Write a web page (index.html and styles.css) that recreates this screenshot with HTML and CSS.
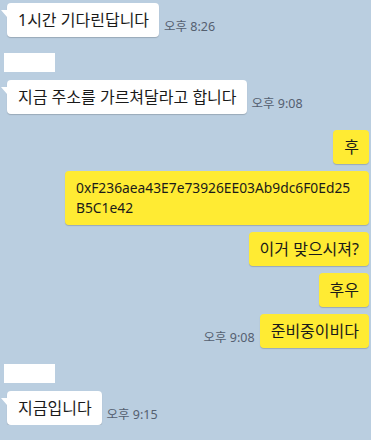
FILE: index.html
```html
<!DOCTYPE html>
<html lang="ko">
<head>
    <meta charset="UTF-8">
    <meta name="viewport" content="width=device-width, initial-scale=1.0">
    <title>채팅</title>
    <link rel="stylesheet" href="styles.css">
</head>
<body>
    <div class="chat">
        <div class="row in">
            <div class="bubble tail">1시간 기다린답니다</div>
            <span class="time">오후 8:26</span>
        </div>

        <div class="name gap-big"></div>
        <div class="row in">
            <div class="bubble tail">지금 주소를 가르쳐달라고 합니다</div>
            <span class="time">오후 9:08</span>
        </div>

        <div class="row out gap-big">
            <div class="bubble me">후</div>
        </div>
        <div class="row out">
            <div class="bubble me addr">0xF236aea43E7e73926EE03Ab9dc6F0Ed25B5C1e42</div>
        </div>
        <div class="row out">
            <div class="bubble me">이거 맞으시져?</div>
        </div>
        <div class="row out">
            <div class="bubble me">후우</div>
        </div>
        <div class="row out">
            <span class="time">오후 9:08</span>
            <div class="bubble me">준비중이비다</div>
        </div>

        <div class="name gap-big"></div>
        <div class="row in">
            <div class="bubble tail">지금입니다</div>
            <span class="time">오후 9:15</span>
        </div>
    </div>
</body>
</html>
```

FILE: styles.css
```css
body {
    margin: 0;
    background: #bacee0;
    font-family: 'Noto Sans', 'Noto Sans CJK KR', sans-serif;
    color: #1a1a1a;
}
.chat {
    display: flex;
    flex-direction: column;
    gap: 7px;
    padding: 3px 2px 0 7px;
}
.row {
    display: flex;
    align-items: flex-end;
    gap: 5px;
}
.row.out {
    justify-content: flex-end;
}
.bubble {
    position: relative;
    background: #fff;
    border-radius: 4px;
    padding: 7px 10px 7px 11px;
    font-size: 16px;
    line-height: 20px;
    box-shadow: 0 1px 1px rgba(0, 0, 0, 0.18);
}
.bubble.tail::before {
    content: "";
    position: absolute;
    left: -6px;
    top: 7px;
    border-top: 7px solid #fff;
    border-left: 6px solid transparent;
}
.bubble.me {
    background: #ffeb33;
}
.addr {
    max-width: 283px;
    font-size: 13.8px;
    word-break: break-all;
}
.time {
    font-size: 12.5px;
    color: #556070;
    padding-bottom: 2px;
    white-space: nowrap;
}
.name {
    width: 51px;
    height: 19px;
    margin-left: -3px;
    margin-bottom: 1px;
    background: #fff;
}
.gap-big {
    margin-top: 9px;
}
```
